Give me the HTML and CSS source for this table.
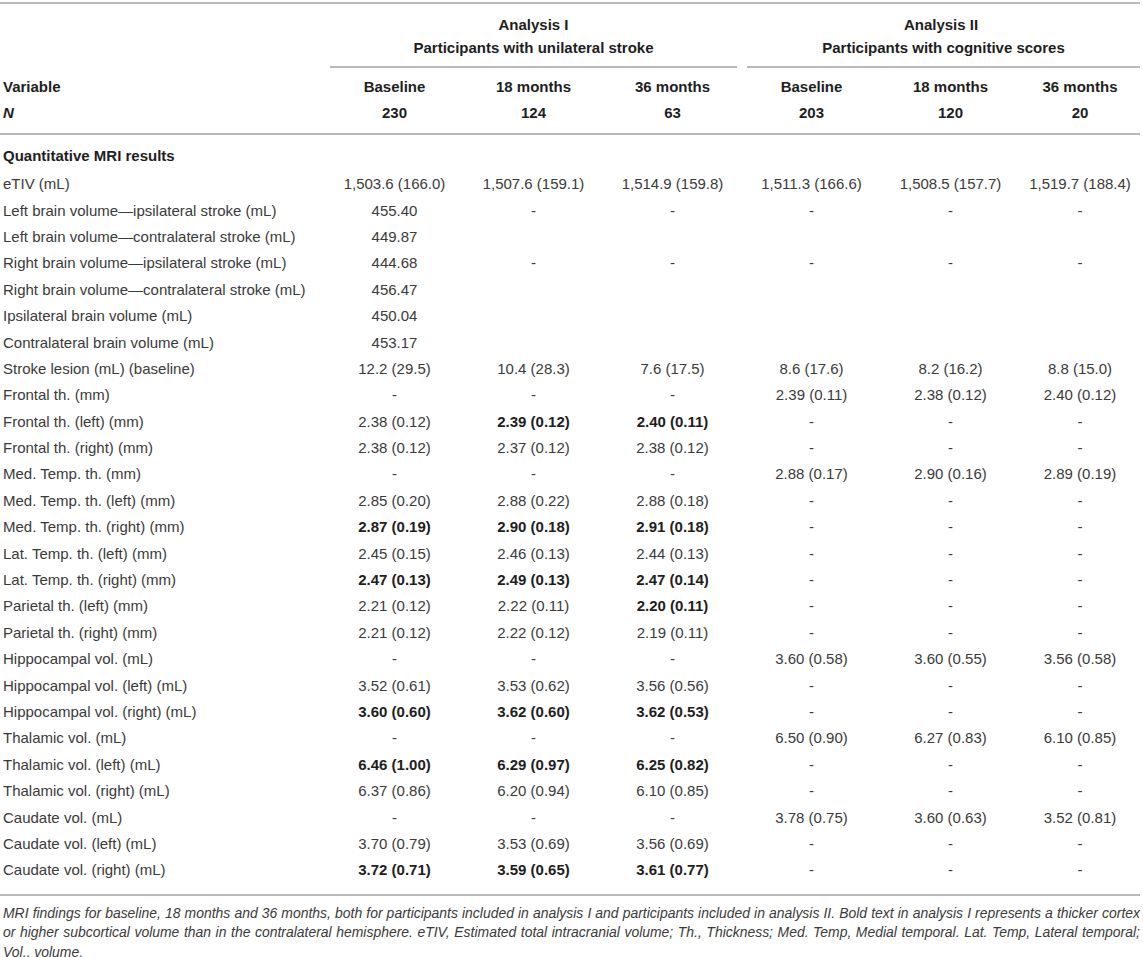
FILE: index.html
```html
<!DOCTYPE html>
<html lang="en">
<head>
<meta charset="utf-8">
<title>MRI findings</title>
<link rel="stylesheet" href="styles.css">
</head>
<body>
<div class="table">
  <div class="row grp1">
    <div></div>
    <div class="span3 b">Analysis I</div>
    <div class="span3 b">Analysis II</div>
  </div>
  <div class="row grp2">
    <div></div>
    <div class="span3 b sub sub1">Participants with unilateral stroke</div>
    <div class="span3 b sub sub2">Participants with cognitive scores</div>
  </div>
  <div class="row colhead b">
    <div class="lab">Variable</div>
    <div>Baseline</div><div>18 months</div><div>36 months</div>
    <div>Baseline</div><div>18 months</div><div>36 months</div>
  </div>
  <div class="row nrow b">
    <div class="lab"><i>N</i></div>
    <div>230</div><div>124</div><div>63</div>
    <div>203</div><div>120</div><div>20</div>
  </div>
  <div class="body">
    <div class="row section b"><div class="lab wide">Quantitative MRI results</div></div>
    <div class="row d"><div class="lab">eTIV (mL)</div><div>1,503.6 (166.0)</div><div>1,507.6 (159.1)</div><div>1,514.9 (159.8)</div><div>1,511.3 (166.6)</div><div>1,508.5 (157.7)</div><div>1,519.7 (188.4)</div></div>
    <div class="row d"><div class="lab">Left brain volume—ipsilateral stroke (mL)</div><div>455.40</div><div>-</div><div>-</div><div>-</div><div>-</div><div>-</div></div>
    <div class="row d"><div class="lab">Left brain volume—contralateral stroke (mL)</div><div>449.87</div><div></div><div></div><div></div><div></div><div></div></div>
    <div class="row d"><div class="lab">Right brain volume—ipsilateral stroke (mL)</div><div>444.68</div><div>-</div><div>-</div><div>-</div><div>-</div><div>-</div></div>
    <div class="row d"><div class="lab">Right brain volume—contralateral stroke (mL)</div><div>456.47</div><div></div><div></div><div></div><div></div><div></div></div>
    <div class="row d"><div class="lab">Ipsilateral brain volume (mL)</div><div>450.04</div><div></div><div></div><div></div><div></div><div></div></div>
    <div class="row d"><div class="lab">Contralateral brain volume (mL)</div><div>453.17</div><div></div><div></div><div></div><div></div><div></div></div>
    <div class="row d"><div class="lab">Stroke lesion (mL) (baseline)</div><div>12.2 (29.5)</div><div>10.4 (28.3)</div><div>7.6 (17.5)</div><div>8.6 (17.6)</div><div>8.2 (16.2)</div><div>8.8 (15.0)</div></div>
    <div class="row d"><div class="lab">Frontal th. (mm)</div><div>-</div><div>-</div><div>-</div><div>2.39 (0.11)</div><div>2.38 (0.12)</div><div>2.40 (0.12)</div></div>
    <div class="row d"><div class="lab">Frontal th. (left) (mm)</div><div>2.38 (0.12)</div><div class="b">2.39 (0.12)</div><div class="b">2.40 (0.11)</div><div>-</div><div>-</div><div>-</div></div>
    <div class="row d"><div class="lab">Frontal th. (right) (mm)</div><div>2.38 (0.12)</div><div>2.37 (0.12)</div><div>2.38 (0.12)</div><div>-</div><div>-</div><div>-</div></div>
    <div class="row d"><div class="lab">Med. Temp. th. (mm)</div><div>-</div><div>-</div><div>-</div><div>2.88 (0.17)</div><div>2.90 (0.16)</div><div>2.89 (0.19)</div></div>
    <div class="row d"><div class="lab">Med. Temp. th. (left) (mm)</div><div>2.85 (0.20)</div><div>2.88 (0.22)</div><div>2.88 (0.18)</div><div>-</div><div>-</div><div>-</div></div>
    <div class="row d"><div class="lab">Med. Temp. th. (right) (mm)</div><div class="b">2.87 (0.19)</div><div class="b">2.90 (0.18)</div><div class="b">2.91 (0.18)</div><div>-</div><div>-</div><div>-</div></div>
    <div class="row d"><div class="lab">Lat. Temp. th. (left) (mm)</div><div>2.45 (0.15)</div><div>2.46 (0.13)</div><div>2.44 (0.13)</div><div>-</div><div>-</div><div>-</div></div>
    <div class="row d"><div class="lab">Lat. Temp. th. (right) (mm)</div><div class="b">2.47 (0.13)</div><div class="b">2.49 (0.13)</div><div class="b">2.47 (0.14)</div><div>-</div><div>-</div><div>-</div></div>
    <div class="row d"><div class="lab">Parietal th. (left) (mm)</div><div>2.21 (0.12)</div><div>2.22 (0.11)</div><div class="b">2.20 (0.11)</div><div>-</div><div>-</div><div>-</div></div>
    <div class="row d"><div class="lab">Parietal th. (right) (mm)</div><div>2.21 (0.12)</div><div>2.22 (0.12)</div><div>2.19 (0.11)</div><div>-</div><div>-</div><div>-</div></div>
    <div class="row d"><div class="lab">Hippocampal vol. (mL)</div><div>-</div><div>-</div><div>-</div><div>3.60 (0.58)</div><div>3.60 (0.55)</div><div>3.56 (0.58)</div></div>
    <div class="row d"><div class="lab">Hippocampal vol. (left) (mL)</div><div>3.52 (0.61)</div><div>3.53 (0.62)</div><div>3.56 (0.56)</div><div>-</div><div>-</div><div>-</div></div>
    <div class="row d"><div class="lab">Hippocampal vol. (right) (mL)</div><div class="b">3.60 (0.60)</div><div class="b">3.62 (0.60)</div><div class="b">3.62 (0.53)</div><div>-</div><div>-</div><div>-</div></div>
    <div class="row d"><div class="lab">Thalamic vol. (mL)</div><div>-</div><div>-</div><div>-</div><div>6.50 (0.90)</div><div>6.27 (0.83)</div><div>6.10 (0.85)</div></div>
    <div class="row d"><div class="lab">Thalamic vol. (left) (mL)</div><div class="b">6.46 (1.00)</div><div class="b">6.29 (0.97)</div><div class="b">6.25 (0.82)</div><div>-</div><div>-</div><div>-</div></div>
    <div class="row d"><div class="lab">Thalamic vol. (right) (mL)</div><div>6.37 (0.86)</div><div>6.20 (0.94)</div><div>6.10 (0.85)</div><div>-</div><div>-</div><div>-</div></div>
    <div class="row d"><div class="lab">Caudate vol. (mL)</div><div>-</div><div>-</div><div>-</div><div>3.78 (0.75)</div><div>3.60 (0.63)</div><div>3.52 (0.81)</div></div>
    <div class="row d"><div class="lab">Caudate vol. (left) (mL)</div><div>3.70 (0.79)</div><div>3.53 (0.69)</div><div>3.56 (0.69)</div><div>-</div><div>-</div><div>-</div></div>
    <div class="row d"><div class="lab">Caudate vol. (right) (mL)</div><div class="b">3.72 (0.71)</div><div class="b">3.59 (0.65)</div><div class="b">3.61 (0.77)</div><div>-</div><div>-</div><div>-</div></div>
  </div>
  <p class="note">MRI findings for baseline, 18 months and 36 months, both for participants included in analysis I and participants included in analysis II. Bold text in analysis I represents a thicker cortex or higher subcortical volume than in the contralateral hemisphere. eTIV, Estimated total intracranial volume; Th., Thickness; Med. Temp, Medial temporal. Lat. Temp, Lateral temporal; Vol., volume.</p>
</div>
</body>
</html>
```

FILE: styles.css
```css
html, body {
  margin: 0;
  padding: 0;
  background: #ffffff;
}
body {
  font-family: "Liberation Sans", Arial, Helvetica, sans-serif;
  font-size: 15px;
  color: #3a3a3a;
}
.table {
  width: 1140px;
  margin-top: 2px;
  border-top: 2px solid #b8b8b8;
}
.row {
  display: grid;
  grid-template-columns: 325px 139px 139px 139px 139px 139px 120px;
  text-align: center;
  line-height: 18px;
  white-space: nowrap;
}
.b {
  font-weight: bold;
  color: #1e1e1e;
}
.lab {
  text-align: left;
  padding-left: 3px;
}
.span3 {
  grid-column: span 3;
}
.grp1 {
  padding-top: 12px;
}
.grp2 > .sub {
  padding-top: 5px;
  padding-bottom: 9px;
  border-bottom: 2px solid #b8b8b8;
}
.sub1 {
  margin: 0 5px;
}
.sub2 {
  margin: 0 0 0 5px;
}
.colhead {
  padding-top: 10px;
}
.nrow {
  padding-top: 8px;
  padding-bottom: 11px;
  border-bottom: 2px solid #b8b8b8;
}
.section {
  padding-top: 12px;
  padding-bottom: 6px;
}
.wide {
  grid-column: span 3;
}
.d {
  height: 26.4px;
  align-items: center;
}
.body {
  padding-bottom: 10px;
  border-bottom: 2px solid #b8b8b8;
}
.note {
  margin: 0;
  padding: 8px 0 0 3px;
  font-style: italic;
  font-size: 13.95px;
  line-height: 19.5px;
  text-align: justify;
  color: #3a3a3a;
}
```
